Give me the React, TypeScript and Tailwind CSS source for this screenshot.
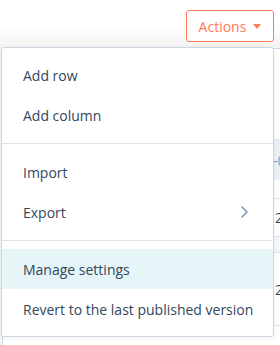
const font = { fontFamily: '"Open Sans", "Noto Sans", sans-serif' };

const Item = ({ label, active, arrow }: { label: string; active?: boolean; arrow?: boolean }) => (
  <div
    className={`flex h-10 items-center justify-between whitespace-nowrap pl-[21px] pr-[25px] text-[14px] text-[#33475b] ${
      active ? 'bg-[#e5f5f8]' : ''
    }`}
  >
    <span>{label}</span>
    {arrow && (
      <svg width="7" height="12" viewBox="0 0 7 12" fill="none">
        <path d="M1 1l5 5-5 5" stroke="#7c98b6" strokeWidth="1.6" strokeLinecap="round" strokeLinejoin="round" />
      </svg>
    )}
  </div>
);

export default function App() {
  return (
    <div className="relative h-[345px] w-[280px] overflow-hidden bg-[#f5f5f5]" style={font}>
      {/* header */}
      <div className="flex h-[48px] items-start justify-end bg-gradient-to-b from-white from-50% to-[#f3f3f3] pr-[6px] pt-[10px]">
        <button className="flex h-[32px] w-[88px] items-center justify-center gap-[7px] rounded-[3px] border border-[#ff7a59] bg-white text-[14px] text-[#ff7a59]">
          Actions
          <svg width="8" height="5" viewBox="0 0 8 5">
            <path d="M0 0h8L4 5z" fill="#ff7a59" />
          </svg>
        </button>
      </div>

      {/* table behind the menu */}
      <div className="ml-[2px] flex flex-col whitespace-nowrap border-l border-t border-[#cbd6e2] bg-white text-[14px] text-[#33475b]">
        <div className="h-[91px] border-b border-[#dfe3eb]" />
        <div className="flex h-[40px] items-center bg-[#eaf0f6] pl-[270px] text-[#7c98b6]">-0</div>
        <div className="h-[19px] border-b border-[#dfe3eb]" />
        <div className="flex h-[38px] items-center border-b border-[#dfe3eb] pl-[272px]">2</div>
        <div className="h-[16px] border-b border-[#dfe3eb] bg-[#f5f8fa]" />
        <div className="flex h-[73px] items-center border-b border-[#dfe3eb] pl-[272px]">2</div>
        <div className="h-[20px]" />
      </div>

      {/* dropdown */}
      <div className="absolute left-[1px] top-[47px] w-[273px] rounded-[3px] border border-[#cbd6e2] bg-white py-[7px] shadow-[0_1px_4px_rgba(45,62,80,0.08)]">
        <Item label="Add row" />
        <Item label="Add column" />
        <div className="my-[8px] h-px bg-[#dfe3eb]" />
        <Item label="Import" />
        <Item label="Export" arrow />
        <div className="my-[8px] h-px bg-[#dfe3eb]" />
        <Item label="Manage settings" active />
        <Item label="Revert to the last published version" />
      </div>
    </div>
  );
}
